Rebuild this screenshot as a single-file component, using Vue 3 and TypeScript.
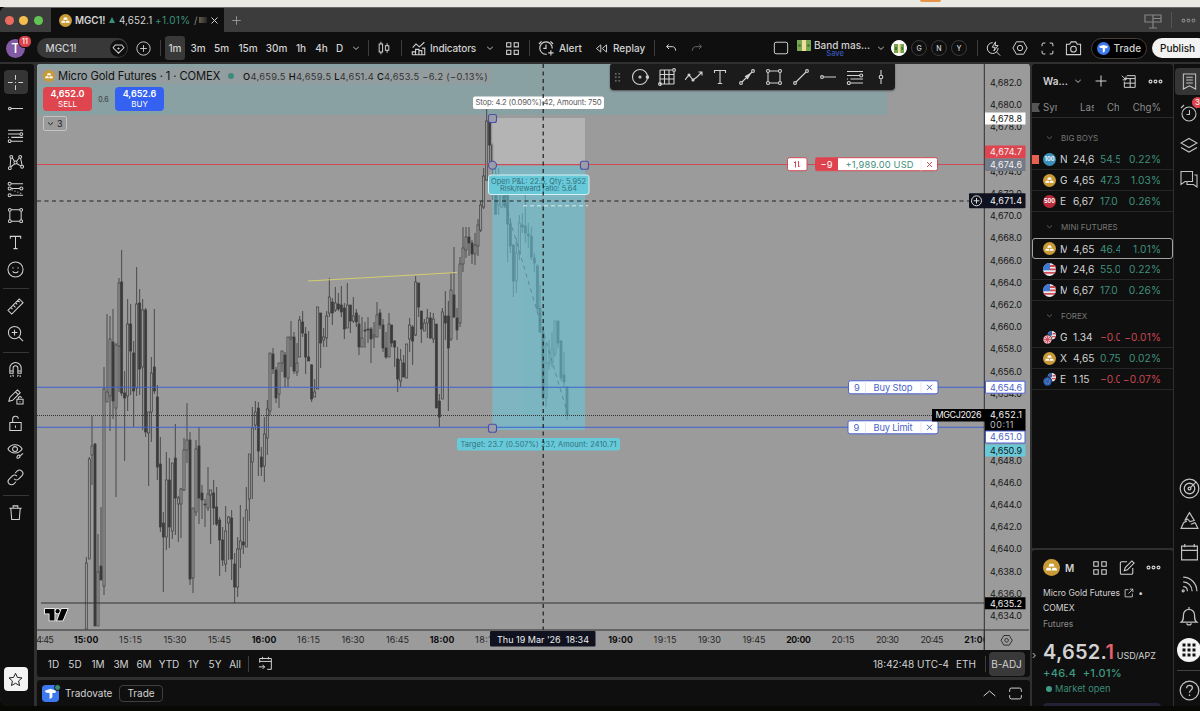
<script setup lang="ts">
import { h } from 'vue'

type Candle = [number, number, number, number, number]

const dot = (x: number, y: number, r: number): string =>
  `M${x - r} ${y}a${r} ${r} 0 1 0 ${2 * r} 0a${r} ${r} 0 1 0 ${-2 * r} 0`

/* All glyphs are drawn on an 18 x 18 grid. */
const glyphs: Record<string, string> = {
  cross: 'M9 1v5M9 12v5M1 9h5M12 9h5M8.5 9h1',
  hline: dot(3, 9, 1.4) + 'M4.5 9h12.5',
  fib: 'M1 3.5h16M1 7.5h12.5M4.5 11h12.5M4.5 15h12.5M1 11h1' + dot(15.2, 7.5, 1.5) + dot(2.8, 15, 1.5),
  pattern: 'M4 4.5L3.3 13.5M5.6 4L8 8M10 8L13 4M14.4 4.5L16 12M4.2 13.5L8 10.5M10.2 10L15 12.8' + dot(4.5, 3, 1.5) + dot(9, 9, 1.6) + dot(14, 3, 1.5) + dot(3, 15, 1.5) + dot(16, 13.5, 1.5),
  forecast: 'M4.5 3h12.5M4.5 8h9M4.5 15h12.5M5 9.5l1 .4M8 10.5l1 .4M11 11.6l1 .4M14 12.8l1 .4' + dot(2.8, 3, 1.6) + dot(2.8, 8, 1.6) + dot(15.2, 8, 1.6) + dot(2.8, 15, 1.6),
  rect: 'M4.5 3h9M4.5 15h9M3 4.5v9M15 4.5v9' + dot(3, 3, 1.5) + dot(15, 3, 1.5) + dot(3, 15, 1.5) + dot(15, 15, 1.5),
  text: 'M3.5 5V2.5h11V5M9 2.5v13M6.8 15.5h4.4',
  smile: dot(9, 9, 8) + 'M6.3 6.5v1.5M11.7 6.5v1.5M6 11c1.5 2 4.5 2 6 0',
  ruler: 'M1 13L13 1l4 4L5 17zM4 10l1.8 1.8M6.5 7.5L9 10M9 5l1.8 1.8M11.5 2.5L13.5 4.5',
  zoom: dot(8, 8, 6.5) + 'M12.8 12.8L17 17M5 8h6M8 5v6',
  magnet: 'M3 13V7.5a6 6 0 0 1 12 0V13h-3.5V7.5a2.5 2.5 0 0 0-5 0V13zM3 10.5h3.5M11.5 10.5H15M4 15v2M6 14.5l1 2M14 15v2M12 14.5l-1 2',
  penlock: 'M2 14l1-4L11 2l3 3-8 8zM9 4l3 3M10.5 12h6.5v5h-6.5zM12 12v-1.5a1.8 1.8 0 0 1 3.5 0M13.7 14v1',
  lock: 'M3 8h12v8.5H3zM6 8V4.5a3 3 0 0 1 6-.5M9 11v2.5',
  eye: 'M1 7.5C4 1.5 13 1.5 16 7.5C13 13 4 13 1 7.5z' + dot(8.5, 7.5, 2.6) + 'M17 12l-4 3.5M13.5 14c-2-1-3 1-3 3 2 .5 4-.5 3-3',
  link: 'M7.5 10.5a3.5 3.5 0 0 0 5 0l3.2-3.2a3.5 3.5 0 0 0-5-5L8.5 4.5M10.5 7.5a3.5 3.5 0 0 0-5 0L2.3 10.7a3.5 3.5 0 0 0 5 5L9.5 13.5',
  trash: 'M2.5 4.5h13M6.5 4.5V2h5v2.5M4 4.5l1 12h8l1-12',
  star: 'M9 1.5l2.3 5 5.5.6-4.1 3.7 1.2 5.5L9 13.5l-4.9 2.8 1.2-5.5L1.2 7.1l5.5-.6z',
  plus: 'M9 2v14M2 9h14',
  close: 'M3 3l12 12M15 3L3 15',
  pluscircle: dot(9, 9, 8) + 'M9 5v8M5 9h8',
  heart: 'M4.5 4h9l3 4L9 15.5 1.5 8zM9 7.5v3M7.5 9h3',
  down: 'M4 7l5 4.5L14 7',
  up: 'M2 12l7-6 7 6',
  candles: 'M5 1v3M5 14v3M2.8 4h4.4v10H2.8zM13 3v3M13 12v3M10.8 6h4.4v6h-4.4z',
  indicators: 'M1.5 16.5v-3.5h4v3.5M5.5 13v-3h4v6.5M9.5 11.5h3.5v5M13 8.5h3.5v8h-15M2 8l4-4.5 4 3.5 6-5.5',
  grid: 'M2 2h5v5H2zM11 2h5v5h-5zM2 11h5v5H2zM11 11h5v5h-5z',
  alert: 'M10 16a7 7 0 1 1 6-6.5M9 5v4.5H6M1 4.5L4 1.5M17 4.5L14 1.5M14.5 11.5v6M11.5 14.5h6',
  rewind: 'M8 4v10L2 9zM16 4v10l-6-5z',
  undo: 'M5.5 3.5L2.5 7l3.5 3.5M2.5 7H11c3 0 5 2.5 5 6',
  redo: 'M12.5 3.5L15.5 7l-3.5 3.5M15.5 7H7c-3 0-5 2.5-5 6',
  square: 'M3.5 2.5h11a2 2 0 0 1 2 2v9a2 2 0 0 1-2 2h-11a2 2 0 0 1-2-2v-9a2 2 0 0 1 2-2z',
  quick: 'M8 2a6.5 6.5 0 1 0 6.5 6.5M12.5 13l4.5 4.5M11.5 1L7.5 7.5h3.5L9.5 12l5-6.5h-3.5z',
  hex: 'M5 2h8l4 7-4 7H5L1 9z' + dot(9, 9, 3),
  full: 'M1.5 6V3.5a2 2 0 0 1 2-2H6M12 1.5h2.5a2 2 0 0 1 2 2V6M16.5 12v2.5a2 2 0 0 1-2 2H12M6 16.5H3.5a2 2 0 0 1-2-2V12',
  camera: 'M1.5 4.5H5L6.5 2h5L13 4.5h3.5v11h-15z' + dot(9, 9.7, 3),
  layout: 'M1 4h16v7H1zM9 4v13M9 7.5h8M5 17h8',
  dots: dot(3, 9, 1.7) + dot(9, 9, 1.7) + dot(15, 9, 1.7),
  table: 'M7 2h10v14H4V9M4 5.5h13M11 5.5V16M4 11h13M1 2l5 5M6 3v4H2',
  list: 'M2.5 1h13v16L9 13.5 2.5 17zM5.5 4.5h7M5.5 7.5h7M5.5 10.5h7',
  clock: dot(9, 10, 7) + 'M9.5 6v4.5H6.5M1 4l3-3M17 4l-3-3',
  layers: 'M9 1.5l8 4.5-8 4.5L1 6zM1 10.5l8 4.5 8-4.5',
  chat: 'M1 1.5h11.5v10H5l-4 3zM14.5 5h2.5v12l-3.5-2.5H7V12',
  radar: dot(9, 9, 8) + dot(9, 9, 4.5) + dot(9, 9, 1.2) + 'M10 8l4.5-4.5',
  hills: 'M9 1.5L4.5 9l2.5-1.5 2.5 2.5 4-1zM3.5 11L1 16.5h16l-2.7-5.5M3.5 11l3-1.5M14.3 11l-4 1.5',
  calendar: 'M1.5 3h15v13h-15zM1.5 7h15M4.5 1v3M13.5 1v3',
  feed: 'M3 2c7 0 13 6 13 13.5M3 6.5c5 0 8.5 4 8.5 9M3 11c2.5 0 4 2 4 4.5' + dot(3, 15, 1),
  bell: 'M2 14.5c2-1.5 2-3 2-6.5a5 5 0 0 1 10 0c0 3.5 0 5 2 6.5zM7 15.5c0 2 4 2 4 0M9 3V1',
  help: dot(9, 9, 8) + 'M6.5 7c0-3.5 5-3 5-.3 0 2-2.5 2-2.5 4.3M9 12.5v1.3',
  target: dot(9, 9, 7.5) + dot(9, 9, 1) + dot(16.5, 9, 1.3),
  gann: 'M2 2h12M2 2v14M2 16h14M16 4v12M6.5 2v14M11 2v14M2 6.5h14M2 11h14' + dot(16, 2, 1.4) + dot(2, 16, 1.4),
  zigzag: 'M0 12l4-5 4 5 4-3 5-5M13.5 4H17v3.5' + dot(4, 7, 1) + dot(8, 12, 1),
  arrow: 'M4 14L14 4M7.5 8.5L12.5 5.5 9.5 10.5zM8.5 9L12 6' + dot(3, 15, 1.4) + dot(15, 3, 1.4),
  trend: 'M4 14L14 4' + dot(3, 15, 1.4) + dot(15, 3, 1.4),
  vline: 'M9 2v5M9 11v5' + dot(9, 9, 1.8),
  goto: 'M2 8V3h14v13h-5M2 6.5h14M5.5 1v3M12.5 1v3M1 13h7M5.5 10.5L8 13l-2.5 2.5',
  edit: 'M9 2H3a1.5 1.5 0 0 0-1.5 1.5v11A1.5 1.5 0 0 0 3 16h11a1.5 1.5 0 0 0 1.5-1.5V9M6 12l1-3.5L14.5 1 17 3.5 9.5 11z',
  external: 'M8 3H2v13h13v-6M10.5 2H16v5.5M16 2L8 10',
  restore: 'M2 7V4.5a2 2 0 0 1 2-2h10a2 2 0 0 1 2 2V7M2 11v2.5a2 2 0 0 0 2 2h10a2 2 0 0 0 2-2V11',
}

const Ic = (p: { n: string; s?: number; w?: number }) =>
  h('svg', { class: 'ic', width: p.s ?? 16, height: p.s ?? 16, viewBox: '0 0 18 18' }, [
    h('path', { d: glyphs[p.n], fill: 'none', stroke: 'currentColor', 'stroke-width': p.w ?? 1.1 }),
  ])
Ic.props = ['n', 's', 'w']

const Gold = (p: { s: number }) =>
  h('svg', { class: 'ic', width: p.s, height: p.s, viewBox: '0 0 18 18' }, [
    h('circle', { cx: 9, cy: 9, r: 9, fill: '#c99a35' }),
    h('path', { d: 'M7 5h4l1.200 3H5.800zM4 9.200h4l1 3H3zM10 9.200h4l1 3H9.200z', fill: '#fff' }),
  ])
Gold.props = ['s']

const Broker = (p: { s: number }) =>
  h('svg', { class: 'ic', width: p.s, height: p.s, viewBox: '0 0 18 18' }, [
    h('rect', { width: 18, height: 18, rx: p.s > 15 ? 4 : 9, fill: '#3d78ee' }),
    h('path', { d: 'M3 6l6-2 6 2-1 2.500h-3V13l-3 2V8.500L4 8z', fill: '#fff' }),
  ])
Broker.props = ['s']

/* wick top, body top, body bottom, wick bottom, solid */
const candles: Candle[] = [
  [557, 563, 629, 629, 0], [457, 459, 559, 559, 0], [416, 446, 455, 485, 0], [443, 444, 626, 626, 1], [534, 572, 626, 626, 0],
  [507, 566, 580, 580, 1], [367, 389, 586, 595, 0], [314, 392, 402, 402, 0], [316, 339, 396, 431, 0], [309, 342, 401, 419, 1],
  [343, 345, 408, 497, 0], [278, 283, 346, 392, 0], [250, 282, 393, 396, 1], [371, 393, 398, 461, 1], [299, 324, 396, 411, 0],
  [304, 324, 351, 395, 1], [341, 353, 391, 427, 1], [267, 304, 388, 396, 0], [289, 303, 369, 395, 1], [299, 310, 367, 430, 0],
  [308, 310, 432, 437, 1], [412, 412, 433, 486, 0], [357, 373, 412, 442, 0], [309, 367, 391, 394, 1], [385, 397, 467, 480, 1],
  [437, 464, 527, 532, 1], [512, 523, 537, 592, 1], [452, 480, 537, 550, 0], [458, 480, 527, 548, 1], [463, 463, 531, 539, 0],
  [424, 458, 498, 535, 1], [496, 498, 504, 542, 0], [488, 489, 504, 538, 0], [438, 450, 490, 491, 0], [403, 440, 450, 463, 0],
  [432, 440, 579, 585, 1], [508, 508, 578, 593, 0], [440, 449, 512, 516, 0], [427, 446, 498, 524, 1], [485, 493, 500, 519, 1],
  [499, 504, 505, 527, 1], [467, 494, 508, 511, 0], [490, 490, 495, 544, 0], [480, 493, 508, 525, 1], [487, 507, 524, 526, 1],
  [517, 520, 540, 576, 1], [527, 540, 560, 566, 1], [506, 531, 564, 572, 0], [516, 517, 523, 560, 0], [510, 518, 559, 580, 1],
  [553, 564, 587, 603, 1], [537, 549, 587, 597, 0], [505, 541, 549, 568, 0], [517, 542, 545, 554, 1], [487, 510, 547, 547, 0],
  [454, 454, 499, 521, 0], [407, 428, 462, 499, 0], [401, 412, 425, 430, 0], [402, 408, 451, 476, 1], [447, 457, 467, 476, 1],
  [417, 434, 466, 482, 0], [400, 409, 438, 455, 0], [353, 353, 411, 415, 0], [348, 354, 369, 374, 1], [367, 370, 398, 403, 1],
  [363, 363, 394, 408, 0], [351, 351, 363, 372, 0], [352, 355, 377, 387, 1], [337, 337, 378, 387, 0], [321, 337, 339, 367, 0],
  [332, 337, 371, 374, 1], [343, 363, 372, 376, 0], [316, 320, 357, 357, 0], [311, 322, 333, 337, 1], [327, 334, 357, 374, 1],
  [331, 357, 361, 361, 1], [364, 365, 399, 402, 1], [379, 392, 397, 397, 0], [307, 307, 389, 389, 0], [313, 313, 343, 368, 1],
  [328, 337, 340, 347, 0], [311, 316, 338, 347, 0], [278, 297, 313, 317, 0], [298, 302, 313, 325, 1], [287, 303, 310, 312, 0],
  [293, 304, 309, 311, 1], [286, 305, 312, 317, 1], [303, 308, 329, 339, 1], [283, 305, 328, 328, 0], [305, 305, 321, 333, 1],
  [297, 316, 321, 323, 0], [309, 313, 322, 327, 1], [315, 324, 347, 355, 1], [317, 338, 347, 347, 0], [322, 330, 331, 348, 1],
  [317, 329, 330, 343, 1], [327, 329, 339, 363, 1], [322, 335, 337, 348, 0], [302, 315, 337, 337, 0], [309, 313, 325, 329, 1],
  [319, 325, 348, 352, 1], [332, 348, 357, 359, 1], [313, 324, 357, 357, 0], [325, 325, 343, 347, 1], [340, 341, 347, 367, 1],
  [347, 359, 379, 392, 1], [349, 360, 381, 387, 0], [355, 363, 377, 377, 1], [344, 344, 378, 378, 0], [318, 325, 339, 352, 0],
  [325, 327, 341, 365, 1], [276, 282, 335, 336, 0], [283, 283, 307, 317, 1], [311, 311, 329, 343, 1], [319, 323, 331, 331, 0],
  [309, 318, 323, 338, 0], [312, 318, 338, 339, 1], [313, 319, 339, 343, 0], [324, 324, 408, 408, 1], [394, 401, 417, 427, 1],
  [308, 312, 399, 399, 0], [291, 316, 323, 340, 1], [301, 316, 348, 411, 1], [273, 290, 339, 341, 0], [247, 295, 317, 318, 1],
  [308, 318, 330, 340, 1], [257, 264, 323, 327, 0], [227, 248, 264, 272, 0], [227, 237, 250, 258, 0], [227, 237, 243, 256, 1],
  [240, 243, 254, 264, 1], [233, 245, 254, 265, 0], [219, 225, 246, 256, 0], [201, 205, 230, 232, 0], [168, 176, 207, 209, 0],
  [107, 121, 180, 181, 0], [119, 122, 145, 162, 1], [143, 145, 166, 200, 1], [167, 177, 214, 215, 1], [168, 180, 205, 215, 0],
  [190, 190, 207, 208, 0], [185, 190, 206, 208, 1], [193, 195, 224, 262, 1], [218, 224, 246, 253, 1], [244, 245, 281, 297, 1],
  [238, 253, 281, 293, 0], [215, 223, 254, 260, 0], [213, 225, 227, 233, 1], [193, 226, 233, 243, 1], [223, 234, 236, 248, 1],
  [227, 236, 257, 260, 1], [253, 258, 263, 272, 1], [264, 266, 309, 312, 1], [285, 308, 332, 333, 1], [330, 332, 398, 400, 1],
  [343, 363, 398, 407, 0], [340, 362, 364, 370, 0], [332, 349, 363, 367, 0], [321, 321, 354, 357, 0], [321, 321, 343, 348, 1],
  [340, 341, 378, 381, 1], [352, 375, 382, 387, 1], [387, 387, 415, 420, 1],
]
const cx = (i: number): number => Math.round((86.2 + i * 2.967) * 3) / 3

const prices = Array.from({ length: 25 }, (_, i) => ({
  t: `4,${682 - i * 2}.0`,
  y: 82.5 + i * 22.22,
})).filter((p) => !['4,676.0', '4,652.0', '4,650.0'].includes(p.t))

const times = [
  ['4:45', 45], ['15:00', 86], ['15:15', 130.5], ['15:30', 175], ['15:45', 219.5], ['16:00', 264], ['16:15', 308.5],
  ['16:30', 353], ['16:45', 397.5], ['18:00', 442], ['18:15', 486.5], ['19:00', 620.5], ['19:15', 665],
  ['19:30', 709.5], ['19:45', 754], ['20:00', 798.5], ['20:15', 843], ['20:30', 887.5], ['20:45', 932], ['21:00', 976.5],
].map(([t, x]) => {
  const label = t as string
  const bold = /:00$/.test(label)
  return { t: label, x: x as number, bold, w: label.length < 5 ? 17.5 : bold ? 24.5 : 23 }
})

const leftTools = [
  ['cross', 'hline', 'fib', 'pattern', 'forecast', 'rect', 'text', 'smile'],
  ['ruler', 'zoom'],
  ['magnet', 'penlock', 'lock', 'eye', 'link'],
  ['trash'],
]
const floatTools = ['target', 'gann', 'zigzag', 'text', 'arrow', 'rect', 'trend', 'hline', 'fib', 'vline']
const intervals = ['1m', '3m', '5m', '15m', '30m', '1h', '4h', 'D']
const ranges = ['1D', '5D', '1M', '3M', '6M', 'YTD', '1Y', '5Y', 'All']

interface Row { k: string; s: string; l: string; c: string; p: string; sel?: boolean; flag?: boolean }
const groups: { name: string; rows: Row[] }[] = [
  { name: 'BIG BOYS', rows: [
    { k: '100', s: 'N', l: '24,6', c: '54.5', p: '0.22%', flag: true },
    { k: 'gold', s: 'G', l: '4,65', c: '47.3', p: '1.03%' },
    { k: '500', s: 'E', l: '6,67', c: '17.0', p: '0.26%' }] },
  { name: 'MINI FUTURES', rows: [
    { k: 'gold', s: 'M', l: '4,65', c: '46.4', p: '1.01%', sel: true },
    { k: 'us', s: 'M', l: '24,6', c: '55.0', p: '0.22%' },
    { k: 'us', s: 'M', l: '6,67', c: '17.0', p: '0.26%' }] },
  { name: 'FOREX', rows: [
    { k: 'gb', s: 'G', l: '1.34', c: '−0.0', p: '−0.01%' },
    { k: 'gold', s: 'X', l: '4,65', c: '0.75', p: '0.02%' },
    { k: 'eu', s: 'E', l: '1.15', c: '−0.0', p: '−0.07%' }] },
]
</script>

<template>
  <div class="screen">
    <div class="desk"><i class="orange"></i></div>
    <div class="window">
      <header class="titlebar">
        <div class="lights"><i class="r"></i><i class="y"></i><i class="g"></i></div>
        <div class="tab">
          <Gold :s="13" />
          <b>MGC1!</b><span class="tri"></span><span class="tp">4,652.1</span><span class="up">+1.01%</span><span class="dim">/</span><i class="smudge"></i>
          <Ic n="close" :s="9" :w="2" />
        </div>
        <Ic class="newtab" n="plus" :s="11" :w="1.5" />
        <span class="grow"></span>
        <Ic n="layout" :s="18" :w="1.2" class="gray" />
        <i class="tsep"></i>
        <Ic n="dots" :s="15" :w="1.3" class="gray" />
      </header>

      <div class="topbar">
        <div class="avatar">T<em>11</em></div>
        <div class="symbol"><span>MGC1!</span><i><Ic n="heart" :s="13" :w="1.4" /></i></div>
        <Ic n="pluscircle" :s="15" />
        <i class="sep"></i>
        <span v-for="(t, i) in intervals" :key="t" class="iv" :class="{ on: i === 0 }">{{ t }}</span>
        <Ic n="down" :s="10" :w="1.6" />
        <i class="sep"></i>
        <Ic n="candles" :s="14" :w="1.3" />
        <i class="sep"></i>
        <Ic n="indicators" :s="15" :w="1.3" />
        <span class="lt ind">Indicators</span>
        <Ic n="down" :s="10" :w="1.6" />
        <Ic n="grid" :s="15" :w="1.3" />
        <i class="sep"></i>
        <Ic n="alert" :s="16" :w="1.3" />
        <span class="lt pad">Alert</span>
        <Ic n="rewind" :s="13" :w="1.3" />
        <span class="lt">Replay</span>
        <i class="sep"></i>
        <Ic n="undo" :s="12" :w="1.5" />
        <Ic n="redo" :s="12" :w="1.5" class="faint" />
        <span></span>
        <Ic n="square" :s="16" />
        <svg class="cash" width="14" height="11" viewBox="0 0 14 11"><rect width="14" height="11" fill="#79a653" /><path d="M5 0h4v11H5z" fill="#f3dc9a" /><circle cx="2.5" cy="5.5" r="1.5" fill="#4e7d38" /><circle cx="11.5" cy="5.5" r="1.5" fill="#4e7d38" /></svg>
        <div class="band"><span>Band mas...</span><small>Save</small></div>
        <Ic n="down" :s="10" :w="1.6" />
        <span class="chip money"><svg width="10" height="9" viewBox="0 0 10 9"><path d="M0 0h10v9H0z" fill="#76a54c" /><path d="M4 0h2.5v9H4z" fill="#f0e2b0" /><path d="M1 3h2v3H1zM7.5 3h1.500v3H7.5z" fill="#426f32" /></svg></span>
        <span class="chip">G</span><span class="chip">N</span><span class="chip">Y</span>
        <i class="sep"></i>
        <Ic n="quick" :s="15" :w="1.2" />
        <Ic n="hex" :s="16" />
        <Ic n="full" :s="13" :w="1.4" />
        <Ic n="camera" :s="17" />
        <span class="trade"><Broker :s="13" />Trade</span>
        <span></span>
        <span class="publish">Publish</span>
      </div>

      <div class="body">
        <nav class="left">
          <template v-for="(g, gi) in leftTools" :key="gi">
            <i v-if="gi" class="hr" :class="{ tight: gi === 3 }"></i>
            <span v-for="n in g" :key="n" class="tool" :class="{ on: n === 'cross' }"><Ic :n="n" :s="17" :w="1.1" /></span>
          </template>
          <span class="grow"></span>
          <span class="fav"><Ic n="star" :s="15" :w="1.2" /></span>
        </nav>

        <main class="center">
          <div class="chart">
            <svg class="plot" width="992" height="586" viewBox="37 64 992 586">
              <rect x="37" y="64" width="850" height="51" fill="#8aa1a4" />
              <rect x="37" y="68" width="454" height="16" fill="#9b9b9b" opacity=".55" />
              <g>
                <g v-for="(c, i) in candles" :key="i">
                  <path :d="`M${cx(i)} ${c[0]}V${c[1]}M${cx(i)} ${c[2]}V${c[3]}`" stroke="#3b3b3b" stroke-width=".85" />
                  <rect :x="cx(i) - 1.05" :y="c[1]" width="2.1" :height="Math.max(c[2] - c[1], 1)" :fill="c[4] ? '#3a3a3a' : '#969696'" stroke="#3a3a3a" stroke-width=".65" />
                </g>
              </g>
              <path d="M308 281L457 272.5" stroke="#d3cd72" stroke-width="1.2" />
              <rect x="492.3" y="118" width="92.7" height="47" fill="#b9b9b9" opacity=".85" />
              <rect x="492.3" y="166" width="92.7" height="264" fill="#6cc6d8" opacity=".6" />
              <rect x="524" y="206" width="61" height="209" fill="#60b5c6" opacity=".12" />
              <path d="M494 166L568 415" stroke="#4f7f8b" stroke-width=".8" stroke-dasharray="4 4" fill="none" />
              <path d="M523 205.8H588" stroke="#dcebee" stroke-dasharray="4 3" />
              <path d="M37 164.5H984" stroke="#cf4a52" />
              <path d="M37 387.2H984M37 427.3H984" stroke="#3f60d0" stroke-width="1.1" />
              <path d="M37 415.5H984" stroke="#333" stroke-dasharray="1 1" />
              <path d="M41 603H984" stroke="#333" />
              <path d="M37 201H970" stroke="#222" stroke-width="1.2" stroke-dasharray="4 3.5" />
              <rect x="473" y="96.5" width="131" height="12.5" rx="2" fill="#fff" />
              <text x="475.5" y="105.3" textLength="126" class="note">Stop: 4.2 (0.090%) 42, Amount: 750</text>
              <rect x="488.5" y="175" width="100.5" height="19.5" rx="2.5" fill="#68cad9" stroke="#d8f0f4" />
              <text x="491" y="184" textLength="95" class="note tl">Open P&amp;L: 22.5, Qty: 5.952</text>
              <text x="500" y="191.3" textLength="77" class="note tl">Risk/reward ratio: 5.64</text>
              <rect x="457" y="438" width="163" height="12.5" rx="2" fill="#68cad9" />
              <text x="460.5" y="447" textLength="156" class="note tl">Target: 23.7 (0.507%) 237, Amount: 2410.71</text>
              <path d="M543.2 64V630" stroke="#1c1c1c" stroke-width="1.2" stroke-dasharray="4 3.5" />
              <g fill="#9b9ea8" stroke="#4a4fa5" stroke-width="1.1">
                <rect x="488.5" y="114.5" width="8" height="8" rx="2" />
                <circle cx="492.5" cy="165.3" r="4" />
                <rect x="580.5" y="161.3" width="8" height="8" rx="2" />
                <rect x="488.5" y="424.3" width="8" height="8" rx="2" />
              </g>

              <g class="tag">
                <rect x="787.5" y="157.7" width="19.5" height="13" rx="2" fill="#fff" stroke="#d44c55" />
                <path d="M795.5 167.5V161.5L794 163M798.5 161V167L800 165.5" fill="none" stroke="#d44c55" />
                <rect x="815.5" y="157.7" width="122" height="13" rx="2" fill="#fff" stroke="#d44c55" />
                <path d="M815.5 157.7h22.5v13h-22.5z" fill="#dc434c" />
                <text x="820.5" y="167.5" textLength="12" fill="#fff">−9</text>
                <text x="845.5" y="167.5" textLength="68" fill="#3f8f7d">+1,989.00 USD</text>
                <path d="M921 158v12.5" stroke="#eee" />
                <path d="M927 162l5 5M932 162l-5 5" stroke="#d44c55" />
                <g v-for="o in [{ y: 387.3, x: 848.5, t: 'Buy Stop' }, { y: 427.3, x: 848, t: 'Buy Limit' }]" :key="o.t">
                  <rect :x="o.x" :y="o.y - 6.5" :width="938 - o.x" height="13" rx="2" fill="#fff" stroke="#4b63d6" />
                  <path :d="`M865.5 ${o.y - 6}v12M921 ${o.y - 6}v12`" stroke="#e4e6f5" />
                  <text :x="o.x + 5.5" :y="o.y + 3.3" fill="#4b63c6">9</text>
                  <text x="873.5" :y="o.y + 3.3" textLength="39" fill="#4b63c6">{{ o.t }}</text>
                  <path :d="`M927 ${o.y - 2.5}l5 5M932 ${o.y - 2.5}l-5 5`" stroke="#4b63c6" />
                </g>
              </g>

              <rect x="984" y="64" width="45" height="566" fill="#9b9b9b" />
              <path d="M984.3 64V650" stroke="#2d2d2d" />
              <text v-for="p in prices" :key="p.t" x="990" :y="p.y + 3.3" textLength="32" class="px">{{ p.t }}</text>
              <g class="px">
                <path d="M985 112.5h40.5v12H985z" fill="#fff" />
                <text x="990" y="121.8" textLength="32">4,678.8</text>
                <path d="M985 145.5h40.5v13H985z" fill="#df454e" />
                <text x="990" y="155" textLength="32" class="w">4,674.7</text>
                <path d="M985 158.5h40.5v12.5H985z" fill="#747a87" />
                <text x="990" y="168.3" textLength="32" class="w">4,674.6</text>
                <rect x="969" y="193.3" width="56.5" height="15" rx="1" fill="#10131f" />
                <circle cx="976.5" cy="200.8" r="5" fill="none" stroke="#ddd" />
                <path d="M973.7 200.8h5.6M976.5 198v5.6" stroke="#ddd" />
                <text x="990" y="204" textLength="32" class="w">4,671.4</text>
                <path d="M985.5 381.2h39.5v12h-39.5z" fill="#fff" stroke="#4b63d6" />
                <text x="990" y="390.5" textLength="32" class="bl">4,654.6</text>
                <path d="M932 409h54v12.5h-54zM985 409h40.5v22H985z" fill="#000" />
                <text x="935.5" y="418.3" textLength="46" class="w">MGCJ2026</text>
                <text x="990" y="418.3" textLength="32" class="w">4,652.1</text>
                <text x="990" y="428" textLength="23.5" class="w o">00:11</text>
                <path d="M985.5 431h39.5v12h-39.5z" fill="#fff" stroke="#4b63d6" />
                <text x="990" y="440.3" textLength="32" class="bl">4,651.0</text>
                <path d="M985 444.5h40.5v12H985z" fill="#68cad9" />
                <text x="990" y="453.7" textLength="32">4,650.9</text>
                <path d="M985 597.2h40.5v12H985z" fill="#000" />
                <text x="990" y="606.5" textLength="32" class="w">4,635.2</text>
              </g>

              <path d="M37 630H1029" stroke="#2d2d2d" />
              <text v-for="t in times" :key="t.t" :x="t.x" y="643.3" text-anchor="middle" :textLength="t.w" class="tm" :class="{ bold: t.bold }">{{ t.t }}</text>
              <path d="M985 631h44v19h-44z" fill="#9b9b9b" />
              <path d="M984.3 630V650" stroke="#2d2d2d" />
              <path d="M1003.8 635.5h5.6l2.8 4.8-2.8 4.8h-5.6l-2.8-4.8z" fill="none" stroke="#333" />
              <circle cx="1006.6" cy="640.3" r="1.8" fill="none" stroke="#333" />
              <rect x="490" y="631" width="105.5" height="15.5" rx="1" fill="#10131f" />
              <text x="497" y="642.7" textLength="92" class="tm tw">Thu 19 Mar '26&#160; 18:34</text>
              <g fill="#000" stroke="#fff" stroke-width="1.6" paint-order="stroke">
                <path d="M45 609h9.5v11.5h-5v-7h-4.5z" /><circle cx="57.7" cy="611.3" r="2.2" /><path d="M61.5 609h6l-4.8 11.5h-5.5z" />
              </g>
            </svg>

            <div class="legend">
              <div class="name"><Gold :s="12" /><span class="ttl">Micro Gold Futures · 1 · COMEX</span><i class="live"></i>
                <span class="ohlc"><b>O</b>4,659.5 <b>H</b>4,659.5 <b>L</b>4,651.4 <b>C</b>4,653.5 −6.2 (−0.13%)</span>
              </div>
              <div class="quotes">
                <div class="q sell"><b>4,652.0</b><span>SELL</span></div>
                <small>0.6</small>
                <div class="q buy"><b>4,652.6</b><span>BUY</span></div>
              </div>
              <div class="count"><Ic n="down" :s="9" :w="2" />3</div>
            </div>
            <div class="floatbar">
              <i class="grip"></i>
              <Ic v-for="n in floatTools" :key="n" :n="n" :s="18" :w="1.1" />
            </div>
          </div>

          <div class="rangebar">
            <span v-for="r in ranges" :key="r">{{ r }}</span>
            <i class="sep"></i>
            <Ic n="goto" :s="15" :w="1.2" />
            <span></span>
            <span>18:42:48 UTC-4</span>
            <span>ETH</span>
            <i class="sep"></i>
            <span class="badj">B-ADJ</span>
          </div>
          <div class="broker">
            <span class="blogo"><Broker :s="17" /><i></i></span>
            <span class="bt">Tradovate</span>
            <span class="btn">Trade</span>
            <span class="grow"></span>
            <Ic n="up" :s="15" :w="1.2" />
            <Ic n="restore" :s="15" :w="1.2" class="rst" />
          </div>
        </main>

        <aside class="side">
          <section class="watch">
            <div class="whead"><b>Wa...</b><Ic n="down" :s="10" :w="1.5" /><Ic n="plus" :s="14" :w="1.3" /><Ic n="table" :s="15" :w="1.2" /><Ic n="dots" :s="15" :w="1.4" /></div>
            <div class="cols"><i class="flagicon"></i><span>Sym</span><span>Last</span><span class="ch">Chg</span><span class="end">Chg%</span></div>
            <div v-for="g in groups" :key="g.name" class="group">
              <div class="gname"><Ic n="down" :s="9" :w="1.5" />{{ g.name }}</div>
              <div v-for="(r, i) in g.rows" :key="i" class="row" :class="{ sel: r.sel, flag: r.flag }">
                <span class="logo">
                  <Gold v-if="r.k === 'gold'" :s="13" />
                  <span v-else-if="r.k === '100' || r.k === '500'" class="num" :class="'n' + r.k">{{ r.k }}</span>
                  <svg v-else-if="r.k === 'us'" class="flg" width="13" height="13" viewBox="0 0 13 13"><circle cx="6.5" cy="6.5" r="6.5" fill="#e8e8ee" /><path d="M7 2h5l1 2H7zM7 5.5h6v1.8H7zM.7 9h11.6l-1 1.8H1.7z" fill="#d24a52" /><path d="M6.5 0A6.5 6.5 0 0 0 0 7.3h7V0z" fill="#3f78d0" /></svg>
                  <svg v-else class="flg" width="13" height="13" viewBox="0 0 13 13"><circle cx="8.8" cy="4.2" r="4.2" fill="#e8e8ee" /><path d="M9 0a4.2 4.2 0 0 0-4.2 4.5H9z" fill="#3461ad" /><path d="M9.5 2h3v1.5h-3zM9 5h4v1.3H9z" fill="#d24a52" /><circle cx="4.5" cy="8.3" r="4.7" fill="#101010" /><circle cx="4.5" cy="8.5" r="4.2" :fill="r.k === 'gb' ? '#e4b3be' : '#2b60b8'" /><path v-if="r.k === 'gb'" d="M4.5 4.3v8.4M.3 8.5h8.4M1.5 5.5l6 6M7.5 5.5l-6 6" stroke="#cf3548" stroke-width=".7" /><circle v-else cx="4.5" cy="8.5" r="2.2" fill="none" stroke="#d3c366" stroke-width=".6" stroke-dasharray=".8 1" /></svg>
                </span>
                <span class="s">{{ r.s }}</span><span class="l">{{ r.l }}</span>
                <span class="c" :class="{ dn: r.p[0] === '−' }">{{ r.c }}</span>
                <span class="p" :class="{ dn: r.p[0] === '−' }">{{ r.p }}</span>
              </div>
            </div>
          </section>
          <section class="detail">
            <div class="dhead"><Gold :s="17" /><b>M</b><Ic n="grid" :s="16" :w="1.2" /><Ic n="edit" :s="16" :w="1.2" /><Ic n="dots" :s="15" :w="1.4" /></div>
            <p class="d1">Micro Gold Futures <Ic n="external" :s="10" :w="1.5" /> •</p>
            <p class="d1">COMEX</p>
            <p class="d1 mute">Futures</p>
            <div class="big"><b>4,652.<em>1</em></b><span>USD/APZ</span></div>
            <div class="chg">+46.4&nbsp; +1.01%</div>
            <div class="open"><i></i>Market open</div>
            <div class="strip"></div>
            <i class="handle">›</i>
          </section>
        </aside>

        <nav class="rail">
          <span class="on"><Ic n="list" :s="17" /></span>
          <span class="up1"><Ic n="clock" :s="18" /><em>3</em></span>
          <span class="up1"><Ic n="layers" :s="18" /></span>
          <span class="up1"><Ic n="chat" :s="18" /></span>
          <span class="grow"></span>
          <span><Ic n="radar" :s="21" /></span>
          <span><Ic n="hills" :s="19" /></span>
          <span><Ic n="calendar" :s="19" /></span>
          <span><Ic n="feed" :s="19" /></span>
          <span><Ic n="bell" :s="20" /></span>
          <span class="apps"><svg width="24" height="24" viewBox="0 0 24 24"><circle cx="12" cy="12" r="12" fill="#f4f4f4" /><path d="M5.5 7h3M10.5 7h3M15.5 7h3M5.5 12h3M10.5 12h3M15.5 12h3M5.5 17h3M10.5 17h3M15.5 17h3" stroke="#111" stroke-width="3" /></svg></span>
          <i class="hr"></i>
          <span><Ic n="help" :s="21" /></span>
        </nav>
      </div>
    </div>
  </div>
</template>

<style>
body { background: #0a0a06; overflow: hidden; }
</style>

<style scoped>
.screen { width: 1200px; height: 711px; overflow: hidden; background: #080905; font-family: Inter, "Liberation Sans", sans-serif; color: #d2d2d2; font-size: 10px; display: flex; flex-direction: column; }
.screen * { box-sizing: border-box; }
.ic { display: block; flex: none; }
b { font-weight: 600; }
em, i { font-style: normal; }
.grow { flex: 1; }
.desk { height: 7px; background: #e9e8e3; flex: none; display: flex; padding-left: 920px; }
.orange { width: 21px; height: 2px; background: #e8954a; border-radius: 0 0 2px 2px; }
.window { height: 699px; background: #303030; border-radius: 6px 0 0 8px; overflow: hidden; display: flex; flex-direction: column; }
.titlebar { height: 25px; flex: none; background: #3c3c3c; border-top: 1px solid #686868; display: flex; align-items: center; padding-right: 4px; }
.lights { width: 51px; display: flex; gap: 5.3px; padding-left: 5px; }
.lights i { width: 9px; height: 9px; border-radius: 50%; }
.lights .r { background: #ec6a5e; } .lights .y { background: #f4be4f; } .lights .g { background: #61c454; }
.tab { width: 173px; height: 24px; background: #0f0f0f; display: flex; align-items: center; padding-left: 8px; white-space: nowrap; font-size: 9.8px; }
.tab b { margin-left: 3px; width: 31px; letter-spacing: -.1px; }
.tri { width: 6px; height: 6px; margin: 0 4px 0 3px; background: #36917b; clip-path: polygon(50% 0, 100% 100%, 0 100%); }
.tp { width: 36px; letter-spacing: .1px; } .up { color: #3e927e; width: 39px; font-size: 10px; letter-spacing: .3px; } .dim { color: #888; }
.smudge { width: 8px; height: 6px; margin: 0 3px 0 1px; background: linear-gradient(90deg, #655e4e, #262522); }
.newtab { margin-left: 7px; color: #999; }
.gray { color: #858585; }
.tsep { width: 1px; height: 16px; background: #555; margin: 0 9px; }
.topbar { height: 30px; padding-top: 2px; flex: none; background: #0f0f0f; display: grid; align-items: center; justify-items: center; white-space: nowrap; font-weight: 500;
  grid-template-columns: 31px 102px 20px 14px 16px 30px 17px 36px 21px 28px 13px 23px 10px 14px 18px 16px 18px 53px 20px 24px 10px 23px 33px 23px 37px 8px 25px 28px 1fr 24px 21px 59px 16px 20px 20px 20px 20px 16px 17px 36px 18px 34px 57px 5px 48px; }
.topbar .sep, .rangebar .sep { width: 1px; height: 16px; background: #3d3d3d; }
.avatar { width: 19px; height: 19px; border-radius: 50%; background: #8259a3; color: #fff; font-size: 13px; display: grid; place-items: center; position: relative; }
.avatar em { position: absolute; left: 12px; top: -4px; background: #dc434c; border-radius: 6px; font-size: 7px; padding: 1px 3px; line-height: 9px; border: 1px solid #0f0f0f; }
.symbol { width: 91px; height: 20px; border-radius: 10px; background: #383838; display: flex; align-items: center; justify-content: space-between; padding: 0 1px 0 9px; }
.symbol i { width: 17px; height: 17px; border-radius: 50%; background: #0f0f0f; display: grid; place-items: center; }
.iv.on { background: #393939; border-radius: 3px; width: 20px; height: 24px; display: grid; place-items: center; }
.lt { justify-self: start; } .pad { padding-left: 2px; } .ind { padding-left: 3px; letter-spacing: -.15px; }
.faint { color: #666; }
.cash { align-self: start; margin-top: 6px; }
.band { justify-self: start; text-align: center; line-height: 10px; padding-top: 1px; }
.band span { display: block; }
.band small { display: block; font-size: 7.5px; line-height: 8px; color: #3657bd; margin-left: -14px; }
.chip { width: 16px; height: 16px; border-radius: 50%; border: 1px solid #3a3a3a; display: grid; place-items: center; font-size: 7px; }
.chip.money { background: #fff; border-color: #fff; }
.trade { width: 56px; height: 21px; border: 1px solid #494037; background: #000; border-radius: 11px; display: flex; align-items: center; padding-left: 5px; gap: 4px; }
.publish { justify-self: start; width: 56px; height: 20px; border-radius: 10px; background: #f2f2f2; color: #111; display: flex; align-items: center; padding-left: 8px; }
.body { flex: 1; display: flex; padding-top: 2px; min-height: 0; }
.left { width: 34px; flex: none; margin-right: 3px; background: #0f0f0f; display: flex; flex-direction: column; align-items: center; padding: 6px 3px 15px 0; border-radius: 0 3px 0 0; }
.tool { width: 24px; height: 24px; margin-bottom: 2.8px; display: grid; place-items: center; border-radius: 4px; flex: none; }
.tool.on { background: #353535; }
.left .hr { width: 26px; height: 1px; background: #363636; margin: 4px 0 5px; flex: none; }
.left .hr.tight { margin: 3px 0 5px; }
.fav { width: 24px; height: 24px; background: #f3f3f3; color: #222; border-radius: 4px; display: grid; place-items: center; }
.center { width: 993px; display: flex; flex-direction: column; margin-right: 2px; flex: none; }
.chart { position: relative; height: 586px; background: #9b9b9b; border-radius: 3px 3px 0 0; overflow: hidden; flex: none; }
.plot { display: block; }
.plot text { font-family: Inter, "Liberation Sans", sans-serif; }
.note { font-size: 7.7px; fill: #5b5b5b; }
.note.tl { font-size: 7.4px; fill: #33717d; }
.tag text { font-size: 9.3px; }
.px { font-size: 9px; fill: #171717; }
.px .w { fill: #f2f2f2; } .px .o { fill: #bbb; } .px .bl { fill: #4b63c6; }
.tm { font-size: 9px; fill: #262626; }
.tm.bold { font-weight: 700; fill: #0c0c0c; font-size: 8.7px; }
.tm.tw { fill: #eee; }
.legend { position: absolute; left: 6px; top: 5px; color: #111; }
.name { display: flex; align-items: center; height: 14px; white-space: nowrap; }
.ttl { font-size: 11.2px; margin-left: 3px; width: 162px; letter-spacing: -.1px; }
.live { width: 6px; height: 6px; border-radius: 50%; background: #3d8c79; margin: 0 9px 0 8px; }
.ohlc { font-size: 9.3px; color: #333; letter-spacing: .3px; }
.ohlc b { font-weight: 500; color: #111; }
.quotes { display: flex; align-items: center; margin-top: 4px; }
.q { width: 49px; height: 24px; border-radius: 4px; color: #fff; text-align: center; display: flex; flex-direction: column; line-height: 10px; justify-content: center; font-size: 8px; }
.q b { font-size: 9px; }
.sell { background: #df454e; } .buy { background: #3561f2; }
.quotes small { width: 23px; text-align: center; font-size: 7px; color: #333; }
.count { width: 24px; height: 15px; margin-top: 5px; border: 1px solid #c4c4c4; border-radius: 2px; display: flex; align-items: center; gap: 2px; padding-left: 2px; font-size: 9px; color: #222; }
.floatbar { position: absolute; left: 573px; top: 0; width: 285px; height: 26px; background: #1b1b1b; border-radius: 2px 0 4px 4px; display: flex; align-items: center; gap: 8.85px; padding-left: 4px; box-shadow: 0 1px 2px #555; }
.grip { width: 7px; height: 10px; background: radial-gradient(circle, #666 0.7px, transparent 1px) 0 0 / 3.5px 3.5px; margin-right: 1px; flex: none; }
.rangebar { height: 27px; flex: none; background: #0f0f0f; display: grid; align-items: center; justify-items: center; white-space: nowrap; border-radius: 0 0 3px 3px; font-size: 10px; padding: 0 5px 0 6px;
  grid-template-columns: 21px 22px 24px 22px 24px 26px 23px 20px 20px 6px 28px 1fr 78px 32px 6px 37px; }
.badj { background: #393939; border-radius: 4px; width: 36px; height: 24px; display: grid; place-items: center; }
.broker { height: 26px; margin-top: 3px; background: #0f0f0f; border-radius: 3px 3px 0 0; display: flex; align-items: center; padding: 0 7px 0 5px; }
.blogo { position: relative; }
.blogo i { position: absolute; width: 5px; height: 5px; right: -2px; top: -1px; border-radius: 50%; background: #3d8c79; border: 1px solid #0f0f0f; box-sizing: content-box; }
.bt { margin-left: 6px; width: 54px; }
.btn { border: 1px solid #3f3f3f; border-radius: 4px; width: 44px; height: 17px; display: grid; place-items: center; }
.rst { margin: 0 0 0 11px; }
.side { width: 141px; display: flex; flex-direction: column; flex: none; }
.watch { height: 484px; background: #0f0f0f; border-radius: 3px 3px 0 0; }
.whead { height: 34px; display: grid; grid-template-columns: 35px 22px 24px 30px 24px; align-items: center; justify-items: center; }
.whead b { justify-self: start; padding-left: 11px; font-size: 10px; }
.cols { height: 20px; display: grid; grid-template-columns: 11px 37px 27px 16px 1fr; color: #8d8d8d; font-size: 9.7px; align-items: center; border-bottom: 1px solid #2b2b2b; }
.cols span { overflow: hidden; width: 14px; }
.cols .ch { width: 12px; }
.cols .end { width: auto; text-align: right; padding-right: 12px; }
.flagicon { width: 8px; height: 9px; background: #555; clip-path: polygon(0 0, 100% 0, 75% 50%, 100% 100%, 0 100%); }
.gname { height: 26px; padding: 3px 0 0 13px; display: flex; align-items: center; gap: 7px; color: #777; font-size: 8px; }
.cols + .group .gname { height: 31px; padding-top: 8px; }
.row { height: 21px; display: grid; grid-template-columns: 28px 13px 27px 20px 1fr; align-items: center; border-bottom: 1px solid #262626; font-size: 10.2px; padding-right: 12px; }
.row.sel { border: 1px solid #a4a4a4; border-radius: 3px; padding-right: 11px; grid-template-columns: 27px 13px 27px 20px 1fr; }
.row.flag { background: linear-gradient(#e8604f, #e8604f) 0 6px / 7px 9px no-repeat; }
.logo { padding-left: 11px; }
.row.sel .logo { padding-left: 10px; }
.flg { display: block; }
.num { width: 13px; height: 13px; border-radius: 50%; color: #fff; font-size: 5.5px; font-weight: 700; display: grid; place-items: center; }
.n100 { background: #3a8fbb; } .n500 { background: #b92b3b; }
.s { width: 7px; overflow: hidden; } .c { width: 20px; overflow: hidden; color: #3f8f7d; }
.l { width: 22px; white-space: nowrap; } .p { text-align: right; color: #3f8f7d; white-space: nowrap; margin-left: -4px; letter-spacing: .1px; }
.c.dn, .p.dn { color: #c84750; }
.detail { position: relative; margin-top: 2px; flex: 1; background: #0f0f0f; border-radius: 3px 3px 0 0; padding-left: 11px; overflow: hidden; }
.dhead { height: 35px; display: grid; grid-template-columns: 22px 27px 27px 27px 27px; align-items: center; }
.dhead b { font-size: 10px; }
.d1 { margin: 0; height: 15.5px; display: flex; align-items: center; gap: 4px; font-size: 8.6px; white-space: nowrap; }
.mute { color: #888; }
.big { display: flex; align-items: baseline; height: 28px; line-height: 28px; margin-top: 6px; width: 113px; overflow: hidden; white-space: nowrap; }
.big b { font-size: 20px; width: 76px; letter-spacing: .25px; } .big em { color: #e4606b; }
.big span { font-size: 9px; }
.chg { color: #3f9a83; font-size: 11px; font-weight: 500; line-height: 13px; margin-top: 1px; letter-spacing: .3px; }
.open { color: #3c8a77; font-size: 9.3px; line-height: 18px; display: flex; align-items: center; gap: 3px; padding-left: 3px; }
.open i { width: 6px; height: 6px; border-radius: 50%; background: #3f9a83; }
.strip { height: 8px; margin-top: 5px; width: 118px; border-radius: 4px; background: #262037; }
.handle { position: absolute; left: 0; top: 98px; width: 6px; height: 16px; color: #aaa; font-size: 11px; line-height: 14px; }
.rail { width: 26px; flex: none; margin-left: 1px; background: #0f0f0f; display: flex; flex-direction: column; align-items: center; padding: 4px 0 0 4px; overflow: hidden; color: #c2c2c2; }
.rail span { height: 32px; width: 28px; display: grid; place-items: center; flex: none; position: relative; }
.rail .up1 { height: 33px; }
.rail .grow { height: auto; flex: 1; }
.rail .on { background: #353535; border-radius: 4px 0 0 4px; height: 27px; margin-bottom: 1px; }
.rail em { position: absolute; right: 0; top: 1px; width: 11px; height: 11px; background: #dc434c; color: #fff; border-radius: 6px; font-size: 8px; line-height: 11px; text-align: center; }
.rail .hr { width: 24px; height: 1px; background: #444; margin: 4px 0 3px; flex: none; }
.rail .apps { margin-top: 2px; }
</style>
